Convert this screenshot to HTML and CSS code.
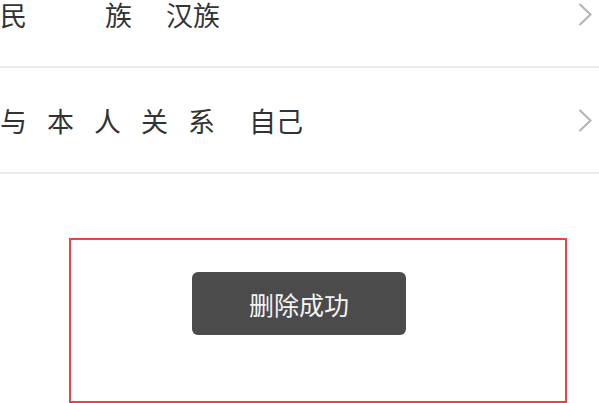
FILE: index.html
```html
<!DOCTYPE html>
<html lang="zh-CN">
<head>
<meta charset="utf-8">
<title>删除成功</title>
<link rel="stylesheet" href="styles.css">
</head>
<body>
  <div class="list">
    <div class="row">
      <div class="label label-wide"><span>民</span><span>族</span></div>
      <div class="value">汉族</div>
      <svg class="chev" width="14" height="23" viewBox="0 0 14 23"><polyline points="1.5,1 12.5,11.5 1.5,22" fill="none" stroke="#b3b3b3" stroke-width="2"/></svg>
    </div>
    <div class="row">
      <div class="label label-narrow"><span>与</span><span>本</span><span>人</span><span>关</span><span>系</span></div>
      <div class="value">自己</div>
      <svg class="chev" width="14" height="23" viewBox="0 0 14 23"><polyline points="1.5,1 12.5,11.5 1.5,22" fill="none" stroke="#b3b3b3" stroke-width="2"/></svg>
    </div>
  </div>
  <div class="highlight">
    <div class="toast">删除成功</div>
  </div>
</body>
</html>
```
FILE: styles.css
```css
html, body {
  margin: 0;
  padding: 0;
  background: #ffffff;
  overflow: hidden;
}
body {
  width: 599px;
  height: 403px;
  font-family: "Noto Sans CJK SC", "Noto Sans", sans-serif;
  color: #333333;
}
.list {
  margin-top: -38px;
}
.row {
  display: flex;
  align-items: center;
  height: 104px;
  border-bottom: 2px solid #ececec;
  padding-right: 7px;
  font-size: 27px;
  line-height: 1;
}
.label {
  display: flex;
}
.label-wide {
  gap: 78px;
}
.label-narrow {
  gap: 20px;
}
.value {
  margin-left: 34px;
  flex: 1;
}
.chev {
  display: block;
}
.highlight {
  margin: 64px 0 0 69px;
  width: 498px;
  height: 165px;
  box-sizing: border-box;
  border: 2px solid #e84448;
  padding: 32px 0 0 121px;
}
.toast {
  width: 214px;
  height: 63px;
  background: #4b4b4b;
  border-radius: 6px;
  color: #f4f4f4;
  font-size: 25px;
  display: flex;
  align-items: center;
  justify-content: center;
}
```
